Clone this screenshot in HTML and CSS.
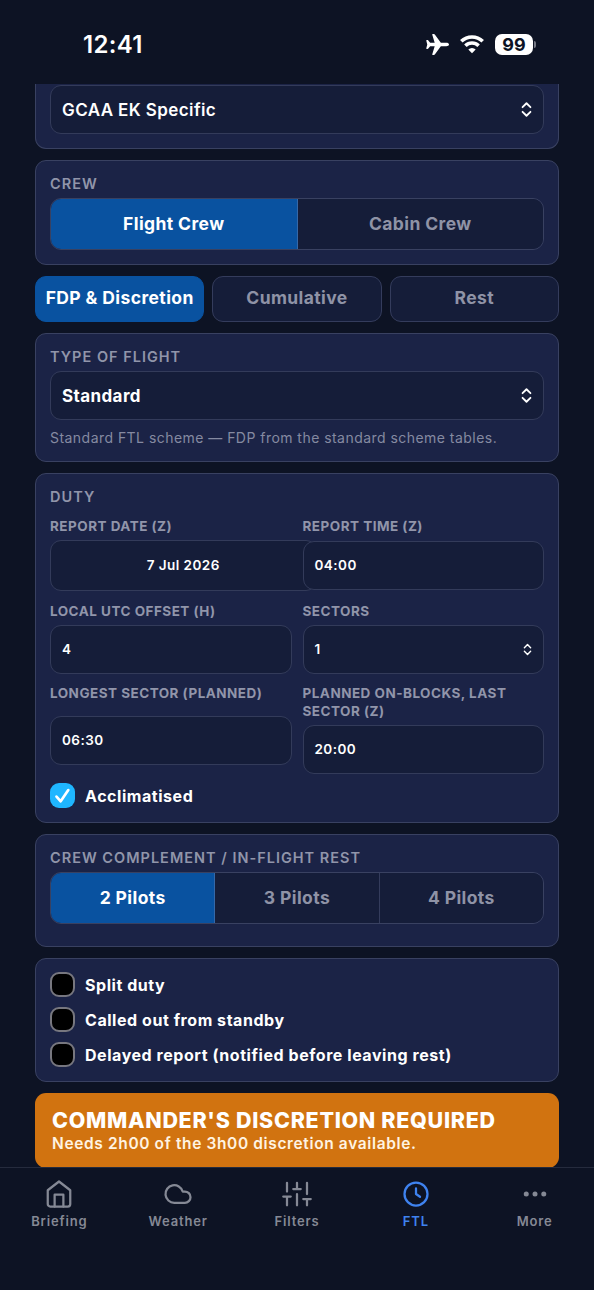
FILE: index.html
```html
<!DOCTYPE html>
<html lang="en">
<head>
    <meta charset="UTF-8">
    <meta name="viewport" content="width=device-width, initial-scale=1.0">
    <title>FTL</title>
    <link rel="stylesheet" href="styles.css">
</head>
<body>
    <header class="status">
        <span class="time">12:41</span>
        <div class="status-icons">
            <svg class="plane" viewBox="0 0 22 20"><path d="M22 10c0-1-1.200-1.600-2.600-1.600h-5.200L8.600.7C8.300.2 8 0 7.500 0H6.400c-.4 0-.5.3-.4.7l2.300 7.700H4L2.200 6.200C2 5.900 1.800 5.800 1.500 5.800H.7c-.3 0-.5.2-.4.6L1.200 10l-.9 3.600c-.1.4.1.6.4.6h.8c.3 0 .5-.1.700-.4L4 11.600h4.300L6 19.300c-.1.400 0 .7.4.7h1.100c.5 0 .8-.2 1.100-.7l5.600-7.700h5.200c1.400 0 2.600-.6 2.600-1.600z"/></svg>
            <svg class="wifi" viewBox="0 0 26 20">
                <path class="arc" d="M2.300 7.300a15.300 15.300 0 0 1 21.400 0M6.400 11.700a9.500 9.500 0 0 1 13.200 0"/>
                <path d="M13 19.300l-3.700-3.700a5.300 5.300 0 0 1 7.400 0z"/>
            </svg>
            <span class="battery">99</span>
        </div>
    </header>

    <main class="content">
        <section class="card card-top">
            <div class="input select">GCAA EK Specific
                <svg class="chevrons" viewBox="0 0 12 18"><path d="M1.700 6.500L6 2.200l4.300 4.300M1.700 11.500L6 15.800l4.300-4.300"/></svg>
            </div>
        </section>

        <section class="card card-crew">
            <h2>CREW</h2>
            <div class="segment">
                <button class="active">Flight Crew</button>
                <button>Cabin Crew</button>
            </div>
        </section>

        <div class="tabs">
            <button class="active">FDP &amp; Discretion</button>
            <button>Cumulative</button>
            <button>Rest</button>
        </div>

        <section class="card card-type">
            <h2>TYPE OF FLIGHT</h2>
            <div class="input select">Standard
                <svg class="chevrons" viewBox="0 0 12 18"><path d="M1.700 6.500L6 2.200l4.300 4.300M1.700 11.500L6 15.800l4.300-4.300"/></svg>
            </div>
            <p class="hint">Standard FTL scheme — FDP from the standard scheme tables.</p>
        </section>

        <section class="card card-duty">
            <h2>DUTY</h2>
            <div class="fields">
                <div class="field">
                    <label>REPORT DATE (Z)</label>
                    <div class="input date">7 Jul 2026</div>
                </div>
                <div class="field">
                    <label>REPORT TIME (Z)</label>
                    <div class="input report-time">04:00</div>
                </div>
                <div class="field">
                    <label>LOCAL UTC OFFSET (H)</label>
                    <div class="input">4</div>
                </div>
                <div class="field">
                    <label>SECTORS</label>
                    <div class="input select">1
                        <svg class="chevrons small" viewBox="0 0 12 18"><path d="M1.700 6.500L6 2.200l4.300 4.300M1.700 11.500L6 15.800l4.300-4.300"/></svg>
                    </div>
                </div>
                <div class="field spread">
                    <label>LONGEST SECTOR (PLANNED)</label>
                    <div class="input">06:30</div>
                </div>
                <div class="field">
                    <label>PLANNED ON-BLOCKS, LAST SECTOR (Z)</label>
                    <div class="input">20:00</div>
                </div>
            </div>
            <div class="check">
                <span class="box checked"><svg viewBox="0 0 25 25"><path d="M6.500 13.600l4.200 4.700 7.600-11.200"/></svg></span>
                Acclimatised
            </div>
        </section>

        <section class="card card-complement">
            <h2>CREW COMPLEMENT / IN-FLIGHT REST</h2>
            <div class="segment">
                <button class="active">2 Pilots</button>
                <button>3 Pilots</button>
                <button>4 Pilots</button>
            </div>
        </section>

        <section class="card card-options">
            <div class="check"><span class="box"></span>Split duty</div>
            <div class="check"><span class="box"></span>Called out from standby</div>
            <div class="check"><span class="box"></span>Delayed report (notified before leaving rest)</div>
        </section>

        <section class="banner">
            <strong>COMMANDER'S DISCRETION REQUIRED</strong>
            <span>Needs 2h00 of the 3h00 discretion available.</span>
        </section>
    </main>

    <nav class="bottom-nav">
        <a>
            <svg viewBox="0 0 24 24"><path d="M3 9l9-7 9 7v11a2 2 0 0 1-2 2H5a2 2 0 0 1-2-2z"/><path d="M8.500 22V12.500h7V22"/></svg>
            <span>Briefing</span>
        </a>
        <a>
            <svg viewBox="0 0 24 24"><path d="M17.500 19H9a7 7 0 1 1 6.710-9h1.790a4.500 4.500 0 1 1 0 9z"/></svg>
            <span>Weather</span>
        </a>
        <a>
            <svg viewBox="0 0 24 24"><path d="M4 21v-7M4 10V3M12 21v-9M12 8V3M20 21v-5M20 12V3M1 14h6M9 8h6M17 16h6"/></svg>
            <span>Filters</span>
        </a>
        <a class="current">
            <svg viewBox="0 0 24 24"><circle cx="12" cy="12" r="9.200"/><path d="M12 7.500V12l3.200 2.200"/></svg>
            <span>FTL</span>
        </a>
        <a>
            <svg viewBox="0 0 24 24"><g class="dots"><circle cx="5" cy="12" r="2"/><circle cx="12" cy="12" r="2"/><circle cx="19" cy="12" r="2"/></g></svg>
            <span>More</span>
        </a>
    </nav>
</body>
</html>
```
FILE: styles.css
```css
* {
    box-sizing: border-box;
}
body {
    margin: 0;
    height: 1290px;
    display: flex;
    flex-direction: column;
    overflow: hidden;
    background-color: #0d1324;
    color: #fff;
    font-family: Inter, "Liberation Sans", sans-serif;
}
h2, p {
    margin: 0;
}

/* Status bar */
.status {
    height: 84px;
    flex: none;
    display: flex;
    justify-content: space-between;
    padding: 30px 57px 0 83px;
}
.time {
    font-size: 24px;
    font-weight: 600;
    line-height: 29px;
    letter-spacing: 0.3px;
}
.status-icons {
    display: flex;
    align-items: center;
    height: 28px;
    fill: #fff;
}
.plane {
    width: 23px;
    height: 21px;
    margin-right: 10px;
}
.wifi {
    width: 26px;
    height: 20px;
    margin-right: 10px;
}
.wifi .arc {
    fill: none;
    stroke: #fff;
    stroke-width: 3.6;
}
.battery {
    position: relative;
    width: 38px;
    height: 21px;
    margin-right: 4px;
    border-radius: 7px;
    background-color: #fff;
    color: #0d1324;
    font-size: 18px;
    font-weight: 700;
    line-height: 21px;
    text-align: center;
}
.battery::after {
    content: "";
    position: absolute;
    left: 39px;
    top: 7px;
    width: 2px;
    height: 7px;
    border-radius: 0 2px 2px 0;
    background-color: #747884;
}

/* Cards */
.content {
    height: 1083px;
    flex: none;
    display: flex;
    flex-direction: column;
    gap: 11px;
    padding: 0 35px;
    overflow: hidden;
}
.card {
    flex: none;
    padding: 14px;
    border: 1px solid #394161;
    border-radius: 11px;
    background-color: #1b2346;
}
.card-top {
    height: 65px;
    padding-top: 1px;
    border-top: none;
    border-radius: 0 0 11px 11px;
}
.card-crew {
    height: 105px;
}
.card-type {
    height: 129px;
}
.card-duty {
    height: 350px;
}
.card-complement {
    height: 113px;
}
.card-options {
    height: 124px;
}
.card h2 {
    margin-bottom: 5px;
    color: #9195aa;
    font-size: 14.5px;
    font-weight: 600;
    line-height: 18px;
    letter-spacing: 1px;
}

/* Segmented buttons and tabs */
button {
    flex: 1 1 0;
    padding: 0 0 2px;
    border: none;
    background-color: #151d39;
    color: #8f93a6;
    font-family: inherit;
    font-size: 17.5px;
    font-weight: 700;
    letter-spacing: 0.4px;
    white-space: nowrap;
}
button.active {
    background-color: #0952a0;
    color: #fff;
}
.segment {
    display: flex;
    height: 52px;
    border: 1px solid #394161;
    border-radius: 11px;
    overflow: hidden;
}
.segment button:not(:last-child) {
    border-right: 1px solid #343c5c;
}
.segment .active:not(:last-child) {
    border-right-color: #3568a8;
}
.tabs {
    flex: none;
    display: flex;
    gap: 8px;
    height: 46px;
}
.tabs button {
    padding-bottom: 3px;
    border: 1px solid #343c5c;
    border-radius: 11px;
}
.tabs .active {
    border-color: #0952a0;
}

/* Inputs */
.input {
    display: flex;
    align-items: center;
    height: 49px;
    padding: 0 11px;
    border: 1px solid #333b5a;
    border-radius: 11px;
    background-color: #151d39;
    font-size: 17px;
    font-weight: 600;
    letter-spacing: 0.4px;
}
.card-type .input {
    font-weight: 700;
}
.select {
    justify-content: space-between;
}
.chevrons {
    width: 11px;
    height: 17px;
    fill: none;
    stroke: #fff;
    stroke-width: 2;
    stroke-linecap: round;
    stroke-linejoin: round;
}
.chevrons.small {
    width: 9px;
    height: 13px;
}
.hint {
    margin-top: 9px;
    color: #858aa1;
    font-size: 14px;
    line-height: 18px;
    letter-spacing: 0.46px;
}
.fields {
    display: grid;
    grid-template-columns: 1fr 1fr;
    grid-template-rows: 74px 71px 89px;
    gap: 11px;
    margin-top: 11px;
    margin-bottom: 10px;
}
.field {
    display: flex;
    flex-direction: column;
    gap: 5px;
    min-width: 0;
}
.field label {
    color: #9195aa;
    font-size: 13.5px;
    font-weight: 700;
    line-height: 18px;
    letter-spacing: 0.48px;
}
.field .input {
    flex: none;
    padding-bottom: 1px;
    font-size: 13.5px;
    letter-spacing: 0.45px;
}
.field .date {
    width: calc(100% + 25px);
    height: 51px;
    justify-content: center;
}
.field .report-time {
    position: relative;
    margin-top: 1px;
}
.field.spread {
    gap: 14px;
}

/* Checkboxes */
.check {
    display: flex;
    align-items: center;
    gap: 10px;
    height: 25px;
    font-size: 16px;
    font-weight: 700;
    letter-spacing: 0.55px;
}
.card-options .check + .check {
    margin-top: 10px;
}
.card-options {
    padding-top: 13px;
}
.box {
    width: 25px;
    height: 25px;
    border: 2px solid #77777f;
    border-radius: 9px;
    background-color: #000;
}
.box.checked {
    border: none;
    background-color: #1fb6ff;
}
.box svg {
    display: block;
    fill: none;
    stroke: #fff;
    stroke-width: 2.7;
    stroke-linecap: round;
    stroke-linejoin: round;
}

/* Result banner */
.banner {
    flex: none;
    display: flex;
    flex-direction: column;
    height: 75px;
    padding: 15px 17px;
    border-radius: 11px;
    background-color: #d17310;
}
.banner strong {
    font-size: 21.5px;
    font-weight: 800;
    line-height: 25px;
    letter-spacing: 0.7px;
}
.banner span {
    color: #fff3e2;
    font-size: 15.5px;
    font-weight: 600;
    line-height: 21px;
    letter-spacing: 0.63px;
}

/* Bottom navigation */
.bottom-nav {
    flex: 1;
    display: flex;
    border-top: 1px solid #252b3d;
}
.bottom-nav a {
    flex: 1 1 0;
    display: flex;
    flex-direction: column;
    align-items: center;
    padding-top: 11px;
    color: #858995;
    font-size: 13px;
    font-weight: 600;
    letter-spacing: 0.85px;
}
.bottom-nav svg {
    width: 30px;
    height: 30px;
    margin-bottom: 4px;
    fill: none;
    stroke: currentColor;
    stroke-width: 1.8;
    stroke-linecap: round;
    stroke-linejoin: round;
}
.bottom-nav .dots {
    fill: currentColor;
    stroke: none;
}
.bottom-nav span {
    line-height: 17px;
}
.bottom-nav .current {
    color: #3f83f0;
}
```
